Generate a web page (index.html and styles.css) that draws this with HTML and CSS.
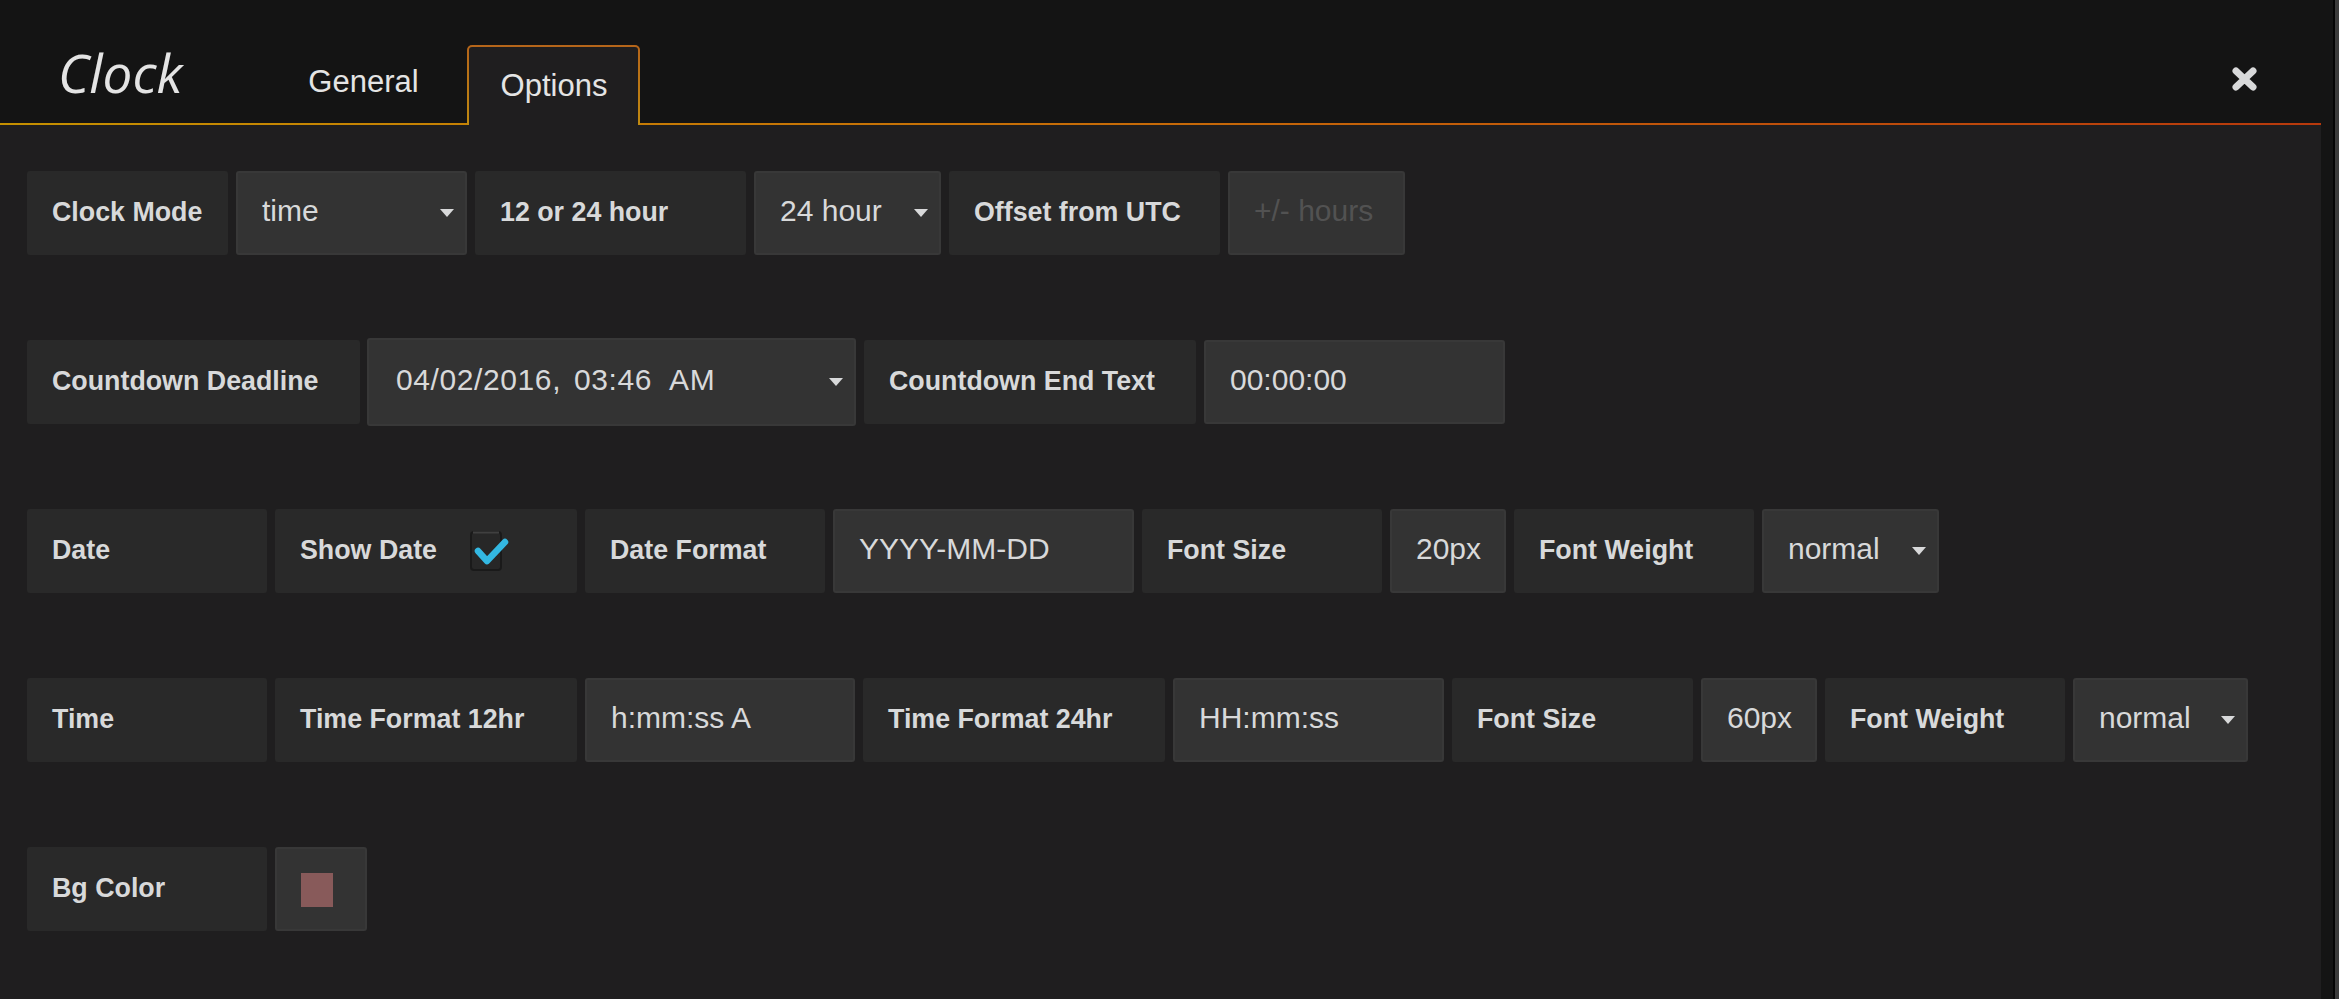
FILE: index.html
```html
<!DOCTYPE html>
<html>
<head>
<meta charset="utf-8">
<title>Clock</title>
<link rel="stylesheet" href="styles.css">
</head>
<body>
<div class="page">
  <div class="panel">
    <header class="hdr">
      <div class="title">Clock</div>
      <nav class="tabs">
        <div class="tab">General</div>
        <div class="tab active">Options</div>
      </nav>
      <div class="close">
        <svg width="25" height="24" viewBox="0 0 25 24"><path d="M4 4 L21 20 M21 4 L4 20" stroke="#d8d9da" stroke-width="7" stroke-linecap="round"/></svg>
      </div>
    </header>
    <main class="content">
      <div class="row">
        <div class="lbl w201">Clock Mode</div>
        <div class="inp sel w231"><span>time</span><i class="caret"></i></div>
        <div class="lbl w271">12 or 24 hour</div>
        <div class="inp sel w187"><span>24 hour</span><i class="caret"></i></div>
        <div class="lbl w271">Offset from UTC</div>
        <div class="inp w177"><span class="ph">+/- hours</span></div>
      </div>
      <div class="row">
        <div class="lbl w333">Countdown Deadline</div>
        <div class="inp sel date w489"><span>04/02/2016, 03:46<span class="ampm">AM</span></span><i class="caret"></i></div>
        <div class="lbl w332">Countdown End Text</div>
        <div class="inp w301"><span>00:00:00</span></div>
      </div>
      <div class="row">
        <div class="lbl w240">Date</div>
        <div class="lbl w302">Show Date
          <svg class="chk" width="40" height="40" viewBox="0 0 40 40"><rect x="1" y="1" width="30" height="38" rx="3" fill="#272727" stroke="#1a1a1a" stroke-width="2"/><path d="M3 1.5 H29" stroke="#404040" stroke-width="2"/><path d="M8 20 L17 30 L35 11" fill="none" stroke="#33b8e2" stroke-width="6.5" stroke-linecap="round" stroke-linejoin="round"/></svg>
        </div>
        <div class="lbl w240">Date Format</div>
        <div class="inp w301"><span>YYYY-MM-DD</span></div>
        <div class="lbl w240">Font Size</div>
        <div class="inp w116"><span>20px</span></div>
        <div class="lbl w240">Font Weight</div>
        <div class="inp sel w177"><span>normal</span><i class="caret"></i></div>
      </div>
      <div class="row">
        <div class="lbl w240">Time</div>
        <div class="lbl w302">Time Format 12hr</div>
        <div class="inp w270"><span>h:mm:ss A</span></div>
        <div class="lbl w302">Time Format 24hr</div>
        <div class="inp w271"><span>HH:mm:ss</span></div>
        <div class="lbl w241">Font Size</div>
        <div class="inp w116"><span>60px</span></div>
        <div class="lbl w240">Font Weight</div>
        <div class="inp sel w175"><span>normal</span><i class="caret"></i></div>
      </div>
      <div class="row">
        <div class="lbl w240">Bg Color</div>
        <div class="inp swatch-box w92"><i class="swatch"></i></div>
      </div>
    </main>
  </div>
  <div class="gutter"></div>
  <div class="sbar"></div>
</div>
</body>
</html>
```

FILE: styles.css
```css
html, body {
  margin: 0;
  padding: 0;
  background: #141414;
  overflow: hidden;
}
.page {
  display: flex;
  width: 2339px;
  height: 999px;
  font-family: "Liberation Sans", Arial, sans-serif;
  color: #d8d9da;
}
.panel {
  width: 2321px;
  height: 999px;
  display: flex;
  flex-direction: column;
  background: #1f1e1f;
  overflow: hidden;
}
.gutter {
  width: 12px;
  background: #141414;
}
.sbar {
  width: 4px;
  border-left: 2px solid #050505;
  background: #3c3c3c;
}
.hdr {
  flex-shrink: 0;
  height: 125px;
  box-sizing: border-box;
  display: flex;
  align-items: flex-end;
  background: linear-gradient(to right, #c59000, #c66a08 50%, #b7390c) bottom / 100% 2px no-repeat, #141414;
}
.title {
  font-family: "Open Sans", sans-serif;
  font-style: italic;
  font-size: 53px;
  color: #e4e4e4;
  margin-left: 58px;
  margin-bottom: 26px;
  line-height: 1;
}
.tabs {
  display: flex;
  align-items: flex-end;
  margin-left: 92px;
}
.tab {
  height: 80px;
  box-sizing: border-box;
  padding: 17px 31px 0 32px;
  border: 2px solid transparent;
  border-bottom: none;
  font-size: 31px;
  color: #e4e4e4;
  margin-right: 15px;
}
.tab.active {
  padding-top: 21px;
  border-radius: 5px 5px 0 0;
  background: linear-gradient(#1f1e1f, #1f1e1f) padding-box, linear-gradient(#b5651a, #c08a10) border-box;
}
.close {
  margin-left: auto;
  margin-right: 64px;
  margin-bottom: 34px;
  height: 24px;
}
.close svg { display: block; }
.content {
  flex: 1;
  min-height: 0;
  padding: 46px 0 0 27px;
}
.row {
  display: flex;
  align-items: center;
  gap: 8px;
  height: 84px;
  margin-bottom: 85px;
}
.lbl {
  height: 84px;
  box-sizing: border-box;
  display: flex;
  align-items: center;
  padding: 0 0 2px 25px;
  background: #292929;
  border-radius: 3px;
  font-weight: bold;
  font-size: 26.8px;
  white-space: nowrap;
}
.inp {
  height: 84px;
  box-sizing: border-box;
  display: flex;
  align-items: center;
  padding: 0 11px 4px 24px;
  background: #333333;
  border: 2px solid #383838;
  border-radius: 3px;
  font-size: 30px;
  white-space: nowrap;
}
.inp.date {
  height: 88px;
  margin-left: -1px;
  padding-left: 27px;
  word-spacing: 4px;
  letter-spacing: 0.6px;
}
.ampm { margin-left: 17px; }
.ph { color: #525252; }
.caret {
  margin-left: auto;
  width: 0;
  height: 0;
  border-left: 7px solid transparent;
  border-right: 7px solid transparent;
  border-top: 8px solid #d8d9da;
  margin-top: 4px;
}
.chk {
  margin-left: 33px;
  margin-top: 2px;
}
.swatch-box {
  padding: 0 0 0 24px;
}
.swatch {
  width: 32px;
  height: 34px;
  background: #885a5a;
  margin-top: 2px;
}
.w92 { width: 92px; }
.w116 { width: 116px; }
.w175 { width: 175px; }
.w177 { width: 177px; }
.w187 { width: 187px; }
.w201 { width: 201px; }
.w231 { width: 231px; }
.w240 { width: 240px; }
.w241 { width: 241px; }
.w270 { width: 270px; }
.w271 { width: 271px; }
.w301 { width: 301px; }
.w302 { width: 302px; }
.w332 { width: 332px; }
.w333 { width: 333px; }
.w489 { width: 489px; }
```
